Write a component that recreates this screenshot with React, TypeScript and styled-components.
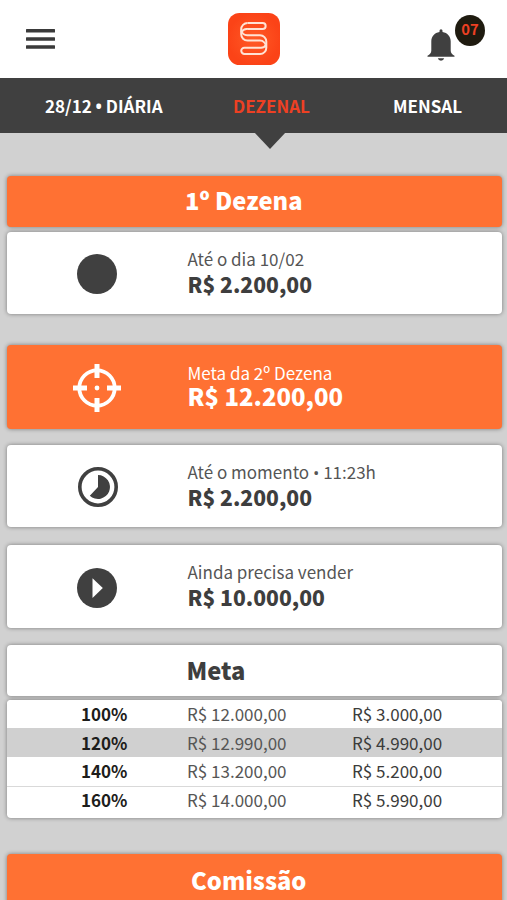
import React from 'react';
import styled, { createGlobalStyle } from 'styled-components';

const GlobalStyle = createGlobalStyle`
  * { box-sizing: border-box; }
  html, body { margin: 0; background: #d1d1d1; }
  body {
    height: 900px;
    overflow: hidden;
    font-family: "Noto Sans CJK SC", "Noto Sans", sans-serif;
    color: #3e3e3e;
  }
`;

const Screen = styled.div`
  width: 507px;
  height: 900px;
  overflow: hidden;
  background: #d1d1d1;
`;

const Header = styled.header`
  height: 78px;
  padding: 0 22px 0 26px;
  display: grid;
  grid-template-columns: 202px 52px 1fr;
  align-items: center;
  background: #fff;
`;

const IconButton = styled.button`
  display: flex;
  padding: 0;
  border: 0;
  background: none;
`;

const Alerts = styled.div`
  position: relative;
  justify-self: end;
  width: 58px;
  height: 78px;
  padding-top: 29px;
`;

const Badge = styled.span`
  position: absolute;
  top: 15px;
  right: 0;
  width: 30px;
  height: 31px;
  border-radius: 50%;
  background: #1f1b10;
  color: #ee4023;
  font-size: 14.8px;
  font-weight: 700;
  line-height: 28px;
  text-align: center;
`;

const Tabs = styled.nav`
  height: 55px;
  padding-left: 45px;
  display: grid;
  grid-template-columns: 188px 160px 1fr;
  background: #404040;
`;

const Tab = styled.a<{ $active?: boolean }>`
  position: relative;
  color: ${(p) => (p.$active ? '#ee4023' : '#fff')};
  font-size: 17px;
  font-weight: 700;
  line-height: 55px;
  white-space: nowrap;
`;

const Bullet = styled.span`
  font-family: "Open Sans", sans-serif;
  line-height: 1;
`;

const Pointer = styled.svg`
  position: absolute;
  top: 54px;
  left: 20.5px;
`;

const Content = styled.main`
  padding: 43px 5px 0 7px;
`;

const Card = styled.section<{ $height: number; $gap: number; $accent?: boolean }>`
  display: grid;
  grid-template-columns: 180px 1fr;
  align-items: center;
  height: ${(p) => p.$height}px;
  margin-bottom: ${(p) => p.$gap}px;
  border-radius: 4px;
  background: ${(p) => (p.$accent ? '#ff7133' : '#fff')};
  color: ${(p) => (p.$accent ? '#fff' : '#3e3e3e')};
  box-shadow: 0 0 4px rgba(0, 0, 0, 0.42);
`;

const Banner = styled(Card)`
  grid-template-columns: 1fr;
`;

const Title = styled.h2<{ $left: number; $raise?: number }>`
  margin: 0;
  padding: 0 0 ${(p) => p.$raise ?? 3}px ${(p) => p.$left}px;
  font-size: 23.7px;
  font-weight: 900;
  line-height: 46px;
  white-space: nowrap;
`;

const IconSlot = styled.div`
  display: flex;
  justify-content: center;
  padding-top: 2px;
`;

const Details = styled.div<{ $raise?: number }>`
  padding: 0 0 ${(p) => p.$raise ?? 4}px 0.5px;
`;

const Label = styled.p<{ $accent?: boolean }>`
  margin: 0;
  font-size: 17px;
  line-height: 25px;
  color: ${(p) => (p.$accent ? '#fff' : '#555')};
`;

const Amount = styled.p<{ $large?: boolean }>`
  margin: 0;
  font-size: ${(p) => (p.$large ? 23.9 : 21.1)}px;
  font-weight: 900;
  line-height: ${(p) => (p.$large ? 22 : 26)}px;
`;

const Goals = styled.section`
  height: 118px;
  margin-bottom: 36px;
  border-radius: 4px;
  overflow: hidden;
  background: #fff;
  box-shadow: 0 0 4px rgba(0, 0, 0, 0.42);
`;

const GoalRow = styled.div<{ $selected?: boolean; $divided?: boolean }>`
  display: grid;
  grid-template-columns: 106px 165px 1fr;
  height: ${(p) => (p.$selected ? 29 : p.$divided ? 30 : 28)}px;
  padding-left: 74px;
  border-bottom: ${(p) => (p.$divided ? '1px solid #d9d9d9' : '0')};
  background: ${(p) => (p.$selected ? '#d0d0d0' : '#fff')};
  font-size: 17px;
  line-height: ${(p) => (p.$selected ? 30 : 28)}px;

  &:last-child {
    line-height: 25px;
  }
`;

const Percent = styled.strong`
  color: #1d1d1b;
  font-weight: 700;
`;

const Target = styled.span`
  color: #565656;
`;

const Reward = styled.span`
  color: #3c3c3b;
`;

const MenuIcon = () => (
  <svg width="29" height="20" viewBox="0 0 29 20" fill="#3a3a3a">
    <rect width="29" height="3.5" rx=".5" />
    <rect y="8.2" width="29" height="3.5" rx=".5" />
    <rect y="16.2" width="29" height="3.5" rx=".5" />
  </svg>
);

const Logo = () => (
  <svg width="52" height="52" viewBox="0 0 52 52" fill="none">
    <defs>
      <radialGradient id="logoFill">
        <stop offset="0" stopColor="#ff5a26" />
        <stop offset="1" stopColor="#fb4317" />
      </radialGradient>
    </defs>
    <rect width="52" height="52" rx="11.5" fill="url(#logoFill)" />
    <g stroke="#ffe3d5" strokeWidth="2">
      <path d="M19.5 10H34.6a3 3 0 0 1 0 6.1H20" />
      <path d="M19.5 10a6.3 6.3 0 0 0-6.3 6.3v5a6.3 6.3 0 0 0 6.3 6.3H32a6 6 0 0 1 6 6" />
      <path d="M20 16.1a6 6 0 0 0-6.5 2.8M13.3 17.5a6 6 0 0 0 6.2 4.8H32a6.3 6.3 0 0 1 6.3 6.3v6A6.3 6.3 0 0 1 32 41H16.4a3.1 3.1 0 0 1 0-6.3H32a6 6 0 0 0 6-3" />
    </g>
  </svg>
);

const BellIcon = () => (
  <svg width="28" height="33" viewBox="0 0 28 33" fill="#404040">
    <path d="M12.5 3V1.7a1.5 1.5 0 0 1 3 0V3c5 .8 8.2 4.5 8.2 9.3v9.2c0 2.4 1.4 3.8 3.8 5.2v1H.5v-1c2.4-1.4 3.8-2.8 3.8-5.2v-9.2C4.3 7.5 7.5 3.8 12.5 3Z" />
    <path d="M10.8 29.2h6.4a3.3 3.3 0 0 1-6.4 0Z" />
  </svg>
);

const DotIcon = () => (
  <svg width="40" height="40" viewBox="0 0 40 40">
    <circle cx="20" cy="20" r="20" fill="#404040" />
  </svg>
);

const TargetIcon = () => (
  <svg width="48" height="48" viewBox="0 0 48 48" fill="none" stroke="#fff">
    <circle cx="24" cy="24" r="17.7" strokeWidth="3.8" />
    <path d="M24 0v14M24 34v14M0 24h14M34 24h14" strokeWidth="5" />
    <circle cx="24" cy="24" r="2.4" fill="#fff" stroke="none" />
  </svg>
);

const ProgressIcon = () => (
  <svg width="42" height="40" viewBox="0 0 42 40">
    <circle cx="22" cy="20" r="18.2" fill="none" stroke="#404040" strokeWidth="3.6" />
    <path d="M22 8a12 12 0 1 1-8.2 20.8L22 20Z" fill="#404040" />
  </svg>
);

const PlayIcon = () => (
  <svg width="40" height="40" viewBox="0 0 40 40">
    <circle cx="20" cy="20" r="20" fill="#404040" />
    <path d="M15.5 10.2 25.8 20 15.5 30Z" fill="#fff" />
  </svg>
);

const goals = [
  { percent: '100%', target: 'R$ 12.000,00', reward: 'R$ 3.000,00' },
  { percent: '120%', target: 'R$ 12.990,00', reward: 'R$ 4.990,00', selected: true },
  { percent: '140%', target: 'R$ 13.200,00', reward: 'R$ 5.200,00', divided: true },
  { percent: '160%', target: 'R$ 14.000,00', reward: 'R$ 5.990,00' },
];

export default function App() {
  return (
    <Screen>
      <GlobalStyle />
      <Header>
        <IconButton aria-label="Menu"><MenuIcon /></IconButton>
        <Logo />
        <Alerts>
          <BellIcon />
          <Badge>07</Badge>
        </Alerts>
      </Header>
      <Tabs>
        <Tab>28/12 <Bullet>•</Bullet> DIÁRIA</Tab>
        <Tab $active>
          DEZENAL
          <Pointer width="32" height="17" viewBox="0 0 32 17">
            <path d="M0 0h32L16 17Z" fill="#404040" />
          </Pointer>
        </Tab>
        <Tab>MENSAL</Tab>
      </Tabs>
      <Content>
        <Banner $height={51} $gap={5} $accent><Title $left={178}>1º Dezena</Title></Banner>
        <Card $height={82} $gap={31}>
          <IconSlot><DotIcon /></IconSlot>
          <Details><Label>Até o dia 10/02</Label><Amount>R$ 2.200,00</Amount></Details>
        </Card>
        <Card $height={84} $gap={16} $accent>
          <IconSlot><TargetIcon /></IconSlot>
          <Details $raise={7}><Label $accent>Meta da 2º Dezena</Label><Amount $large>R$ 12.200,00</Amount></Details>
        </Card>
        <Card $height={82} $gap={18}>
          <IconSlot><ProgressIcon /></IconSlot>
          <Details><Label>Até o momento <Bullet>•</Bullet> 11:23h</Label><Amount>R$ 2.200,00</Amount></Details>
        </Card>
        <Card $height={83} $gap={17}>
          <IconSlot><PlayIcon /></IconSlot>
          <Details $raise={5}><Label>Ainda precisa vender</Label><Amount>R$ 10.000,00</Amount></Details>
        </Card>
        <Banner $height={51} $gap={4}><Title $left={179.5} $raise={1}>Meta</Title></Banner>
        <Goals>
          {goals.map((goal) => (
            <GoalRow key={goal.percent} $selected={goal.selected} $divided={goal.divided}>
              <Percent>{goal.percent}</Percent>
              <Target>{goal.target}</Target>
              <Reward>{goal.reward}</Reward>
            </GoalRow>
          ))}
        </Goals>
        <Banner $height={52} $gap={0} $accent><Title $left={184} $raise={1}>Comissão</Title></Banner>
      </Content>
    </Screen>
  );
}
